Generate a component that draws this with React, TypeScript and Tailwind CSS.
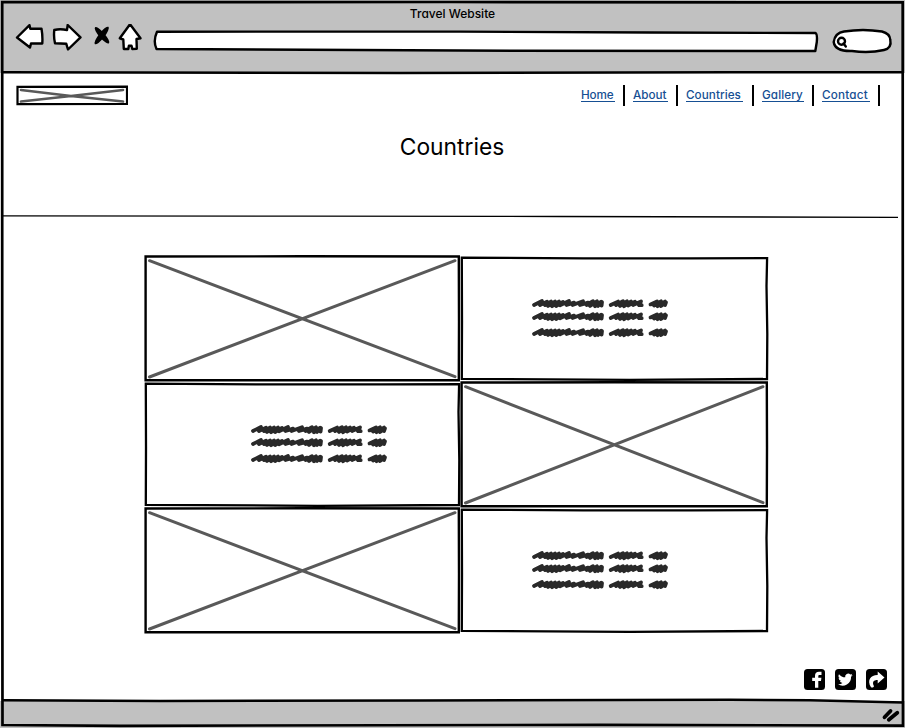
import React from "react";

const FONT = "font-['Inter','Open_Sans',sans-serif] [font-feature-settings:'cv11','ss03']";
const FILL = "absolute left-0 top-0 overflow-visible pointer-events-none";

function Toolbar() {
  return (
    <svg className="block shrink-0" width="905" height="50" viewBox="0 24 905 50" fill="#fff" stroke="#000" strokeWidth="2.4" strokeLinejoin="round" strokeLinecap="round">
      <path d="M17 37.5 L29.5 25.2 L30.3 28.8 L41.5 28.8 Q42.8 36 42.3 43.5 L31 43.5 L30 47.5 Z" />
      <path d="M54.3 30 Q60 28.5 67 30 L67.7 25 L80.5 37.3 L68 49.5 L66.3 43.8 L55 43.2 Q53.5 37 54.3 30 Z" />
      <g fill="#000" stroke="none">
        <ellipse cx="102" cy="35.3" rx="10.6" ry="2.9" transform="rotate(49 102 35.3)" />
        <ellipse cx="101.7" cy="35.5" rx="11" ry="2.9" transform="rotate(-52 101.7 35.5)" />
      </g>
      <path d="M130 24.2 L140.5 38.2 L136.5 39 L136.8 48.8 L132.3 49 L131.5 45.8 L128.9 45.8 L128.3 49 L123.8 49 L123.3 39.5 L119.8 38.3 Z" />
      <path d="M157 31.7 L460 31.6 L650 32.5 L815.5 33 Q817.5 34 816.8 42 L815.3 51 L510 50.7 L156.5 49 Q152.8 41 157 31.7 Z" />
      <path d="M844 31.5 Q863 28.4 882 31.5 Q890 33.5 890.3 40 Q892 48 884 50 Q869 53.5 852 51 Q835 51.5 833.7 42 Q835 32.8 844 31.5 Z" />
      <circle cx="841.5" cy="41.2" r="3.5" />
      <path d="M843.5 43.5 L845.8 46.5" />
    </svg>
  );
}

function ImagePlaceholder({ width }: { width: number }) {
  const r = width - 1.5;
  return (
    <div className="relative h-[126px] bg-white">
      <svg className={FILL} width={width} height="126" fill="none">
        <path d={`M4.5 4.7 L${r - 4.5} 120.7 M4.5 121 L${r - 4.5} 4.7`} stroke="#595959" strokeWidth="3" strokeLinecap="round" />
        <path d={`M.6 .5 L${r * 0.5} .3 L${r - 0.7} 0.5 L${r - 0.5} 65 L${r - 0.7} 124.3 L.6 124.3 L.6 60 Z`} stroke="#000" strokeWidth="2.4" />
      </svg>
    </div>
  );
}

function Scribble() {
  return (
    <svg className="block overflow-visible" width="136" height="10" fill="none" stroke="#292929" strokeWidth="3.8" strokeLinejoin="round" strokeLinecap="round">
      <path d="M1 6 L9 2 L7 6 L14 2.8 L12 6.2 L18 2.5 L15 7 L22 2.5 L19 7.2 L26 2.5 L23 7 L30 3 L27 6.2 L36 2 L33.5 6 L41 3.6 L39.5 6 L50 2.2 L47 6 L55 3.6 L53.5 6 L60 2.2 L57 7 L64 2.3 L62 7.3 L68 2.8 L65 7 L69 3 L68.6 6.6" />
      <path d="M77.7 6 L85 2.6 L83 6 L90 2.2 L87 7 L94 2.2 L91 7.3 L98 2.5 L95 6.5 L102 2.8 L100 6 L108 2.4 L106 6.2 L108.7 6.2" />
      <path d="M117.5 5.4 L124 2.5 L121 6.5 L128 2.3 L124.5 7.2 L132 2.6 L128 7 L133 3.4 L132 6" />
    </svg>
  );
}

function TextCard({ width, left }: { width: number; left?: boolean }) {
  const r = width - 1.5;
  return (
    <div className={`relative h-[126px] bg-white pt-[43px] ${left ? "pl-[107px]" : "pl-[72px]"}`}>
      <svg className={FILL} width={width} height="126" fill="none" stroke="#000" strokeWidth="2.3">
        <path d={`M.8 1.6 L${r * 0.4} 2.4 L${r * 0.75} 2.4 L${r - 0.4} 2.1 L${r - 1} 30 L${r - 0.2} 78 L${r - 0.5} 123 L${r * 0.55} 123.8 L.8 122.8 L1 65 Z`} />
      </svg>
      <div className="mb-[3px]"><Scribble /></div>
      <div className="mb-[6px]"><Scribble /></div>
      <Scribble />
    </div>
  );
}

const LINKS = [
  { name: "Home", box: "w-[34px] mr-[8px]", text: "tracking-[-0.15px]" },
  { name: "About", box: "w-[35px] mr-[8px]", text: "tracking-[0px]" },
  { name: "Countries", box: "w-[57px] mr-[9px]", text: "tracking-[0.05px]" },
  { name: "Gallery", box: "w-[42px] mr-[8px]", text: "tracking-[0.1px]" },
  { name: "Contact", box: "w-[48px] mr-[8px]", text: "tracking-[0.2px]" },
];

export default function App() {
  return (
    <div className={`relative flex h-[728px] w-[905px] flex-col overflow-hidden bg-white text-black ${FONT}`}>
      <header className="h-[73px] shrink-0 bg-[#c1c1c1]">
        <h1 className="h-6 pt-[5px] text-center text-[12px] font-medium leading-[18px]">Travel Website</h1>
        <Toolbar />
      </header>

      <div className="flex h-[52px] shrink-0 justify-between pl-[16px] pr-[25px] pt-[12px]">
        <svg className="block" width="112" height="21" fill="none">
          <path d="M5 5 L55 11 L107 16.5 M5 16.5 L55 11 L107 5" stroke="#595959" strokeWidth="2.7" strokeLinecap="round" />
          <path d="M1.5 1.9 L111 1.6 L111 19 L1.5 19.2 Z" stroke="#000" strokeWidth="2.2" />
        </svg>
        <nav className="flex">
          {LINKS.map((l) => (
            <div key={l.name} className="mr-[8px] flex last:mr-0">
              <a className={`h-[17px] whitespace-nowrap border-b border-[#164f93] text-[11.7px] font-medium leading-[20px] text-[#164f93] ${l.box} ${l.text}`}>{l.name}</a>
              <span className="h-[21px] w-[2px] bg-black" />
            </div>
          ))}
        </nav>
      </div>

      <section className="h-[93px] shrink-0 pt-[7px]">
        <h2 className="pr-[1px] text-center text-[22.8px] leading-[30px]">Countries</h2>
        <svg className="mt-[50px] block" width="905" height="6">
          <path d="M3 3.8 L300 4.2 L560 4.5 L898 5.3" fill="none" stroke="#000" strokeWidth="1.3" />
        </svg>
      </section>

      <main className="ml-[145px] mt-[38px] grid grid-cols-[316px_308px] auto-rows-[126px]">
        <ImagePlaceholder width={316} />
        <TextCard width={308} />
        <TextCard width={316} left />
        <ImagePlaceholder width={308} />
        <ImagePlaceholder width={316} />
        <TextCard width={308} />
      </main>

      <div className="mt-[35px] flex h-[32px] shrink-0 justify-end gap-[10px] pr-[18px]">
        <svg width="21" height="21" viewBox="0 0 21 21">
          <rect width="21" height="21" rx="3.5" />
          <path d="M11 18.7 V12 H8.2 V8.8 H11 V6.8 C11 4 12.5 2.8 15 2.8 H17.5 V6 H15.7 C14.6 6 14.3 6.5 14.3 7.4 V8.8 H17.4 L17 12 H14.3 V18.7 Z" fill="#fff" />
        </svg>
        <svg width="21" height="21" viewBox="0 0 21 21">
          <rect width="21" height="21" rx="3.5" />
          <path transform="translate(3.2 3) scale(.61)" d="M23.6 4.9c-.9.4-1.8.7-2.8.8 1-.6 1.8-1.6 2.2-2.7-1 .6-2 1-3.1 1.2a4.9 4.9 0 0 0-8.4 4.5C7.4 8.5 3.8 6.5 1.3 3.5a4.9 4.9 0 0 0 1.5 6.6c-.8 0-1.6-.2-2.2-.6v.1a4.9 4.9 0 0 0 4 4.8c-.7.2-1.5.2-2.2.1a4.9 4.9 0 0 0 4.6 3.4A9.9 9.9 0 0 1-.3 20a13.9 13.9 0 0 0 21.4-12.4c1-.7 1.8-1.6 2.5-2.7z" fill="#fff" />
        </svg>
        <svg width="21" height="21" viewBox="0 0 21 21">
          <rect width="21" height="21" rx="3.5" />
          <path d="M5 18.3 C0.5 11 5 5.8 11.7 6 V2.5 L18.5 8.5 L11.7 14.5 V11 C7.5 11 5.8 13 8 17.3 C7.5 18.5 6.3 19 5 18.3 Z" fill="#fff" />
        </svg>
      </div>

      <footer className="h-[27px] shrink-0 bg-[#c1c1c1]" />

      <svg className={FILL} width="905" height="728" fill="none" stroke="#000">
        <path d="M4 701.5 L160 700.5 L420 700 L730 699.6 L810 700 L902 702.6 V725 H3 Z" fill="#c1c1c1" stroke="none" />
        <path d="M884.5 717.3 L890.5 711 M888.8 719.7 L897.3 712.7" strokeWidth="3.8" strokeLinecap="round" />
        <path d="M2.2 2.2 L450 2 L902.7 2.4 L902.8 360 L903 725.6 L600 724.8 L120 725.8 L2.5 725 L2.2 400 Z" strokeWidth="2.7" />
        <path d="M3 72.2 L400 73 L730 72.3 L903 72.3" strokeWidth="2.4" />
        <path d="M3 700.3 L160 701 L420 700.5 L730 699.7 L810 700.2 L903 702.6" strokeWidth="2.5" />
      </svg>
    </div>
  );
}
